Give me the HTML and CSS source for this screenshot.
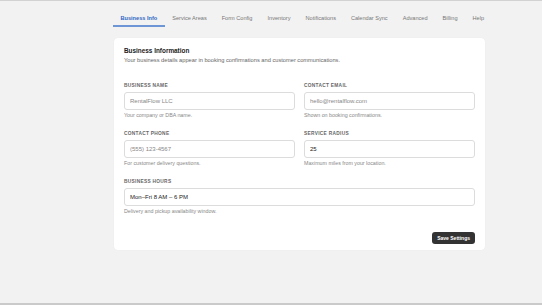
FILE: index.html
```html
<!DOCTYPE html>
<html lang="en">
<head>
    <meta charset="UTF-8">
    <title>Settings</title>
    <link rel="stylesheet" href="styles.css">
</head>
<body>
    <div class="page">
        <nav class="tabs">
            <a class="tab active">Business Info</a>
            <a class="tab">Service Areas</a>
            <a class="tab">Form Config</a>
            <a class="tab">Inventory</a>
            <a class="tab">Notifications</a>
            <a class="tab">Calendar Sync</a>
            <a class="tab">Advanced</a>
            <a class="tab">Billing</a>
            <a class="tab">Help</a>
        </nav>

        <div class="card">
            <h2>Business Information</h2>
            <p class="subtitle">Your business details appear in booking confirmations and customer communications.</p>

            <div class="grid">
                <div class="form-group">
                    <label for="name">Business Name</label>
                    <input type="text" id="name" placeholder="RentalFlow LLC">
                    <p class="hint">Your company or DBA name.</p>
                </div>
                <div class="form-group">
                    <label for="email">Contact Email</label>
                    <input type="email" id="email" placeholder="hello@rentalflow.com">
                    <p class="hint">Shown on booking confirmations.</p>
                </div>
                <div class="form-group">
                    <label for="phone">Contact Phone</label>
                    <input type="text" id="phone" placeholder="(555) 123-4567">
                    <p class="hint">For customer delivery questions.</p>
                </div>
                <div class="form-group">
                    <label for="radius">Service Radius</label>
                    <input type="text" id="radius" value="25">
                    <p class="hint">Maximum miles from your location.</p>
                </div>
                <div class="form-group wide">
                    <label for="hours">Business Hours</label>
                    <input type="text" id="hours" value="Mon–Fri 8 AM – 6 PM">
                    <p class="hint">Delivery and pickup availability window.</p>
                </div>
            </div>

            <div class="actions">
                <button>Save Settings</button>
            </div>
        </div>
    </div>
</body>
</html>
```

FILE: styles.css
```css
body {
    margin: 0;
    height: 305px;
    box-sizing: border-box;
    font-family: "Liberation Sans", Arial, sans-serif;
    background-color: #f2f2f2;
    color: #222;
    border-top: 1px solid #d2d2d2;
    border-bottom: 2px solid #cacaca;
    overflow: hidden;
}
.page {
    width: 371px;
    margin-left: 114px;
}
.tabs {
    display: flex;
    margin-left: -1px;
    white-space: nowrap;
}
.tab {
    padding: 13px 7.5px 3px;
    font-size: 5.6px;
    line-height: 8px;
    color: #777;
    border-bottom: 2px solid transparent;
}
.tab.active {
    color: #2f67c4;
    font-weight: bold;
    border-bottom-color: #6e95d6;
}
.card {
    margin-top: 11px;
    background-color: #fff;
    border-radius: 4px;
    padding: 8px 10px 6px;
    box-shadow: 0 0 1px rgba(0, 0, 0, 0.08);
}
h2 {
    margin: 0;
    font-size: 6.4px;
    line-height: 9px;
    font-weight: bold;
    color: #222;
}
.subtitle {
    margin: 1px 0 0;
    font-size: 5.7px;
    line-height: 8px;
    color: #666;
}
.grid {
    display: grid;
    grid-template-columns: 1fr 1fr;
    column-gap: 9px;
    row-gap: 11px;
    margin-top: 18px;
}
.wide {
    grid-column: 1 / 3;
}
label {
    display: block;
    font-size: 4.8px;
    line-height: 7px;
    font-weight: bold;
    letter-spacing: 0.3px;
    text-transform: uppercase;
    color: #666;
}
input {
    display: block;
    box-sizing: border-box;
    width: 100%;
    height: 18px;
    margin-top: 3px;
    padding: 0 5px;
    font-family: inherit;
    font-size: 6px;
    color: #222;
    background-color: #fff;
    border: 1px solid #dcdcdc;
    border-radius: 3px;
}
input::placeholder {
    color: #888;
}
.hint {
    margin: 2px 0 0;
    font-size: 5.3px;
    line-height: 7px;
    color: #888;
}
.actions {
    display: flex;
    justify-content: flex-end;
    margin-top: 17px;
}
button {
    height: 11.5px;
    padding: 0 5px;
    background-color: #333;
    color: #fff;
    border: none;
    border-radius: 3px;
    font-family: inherit;
    font-size: 5px;
    font-weight: bold;
}
```
